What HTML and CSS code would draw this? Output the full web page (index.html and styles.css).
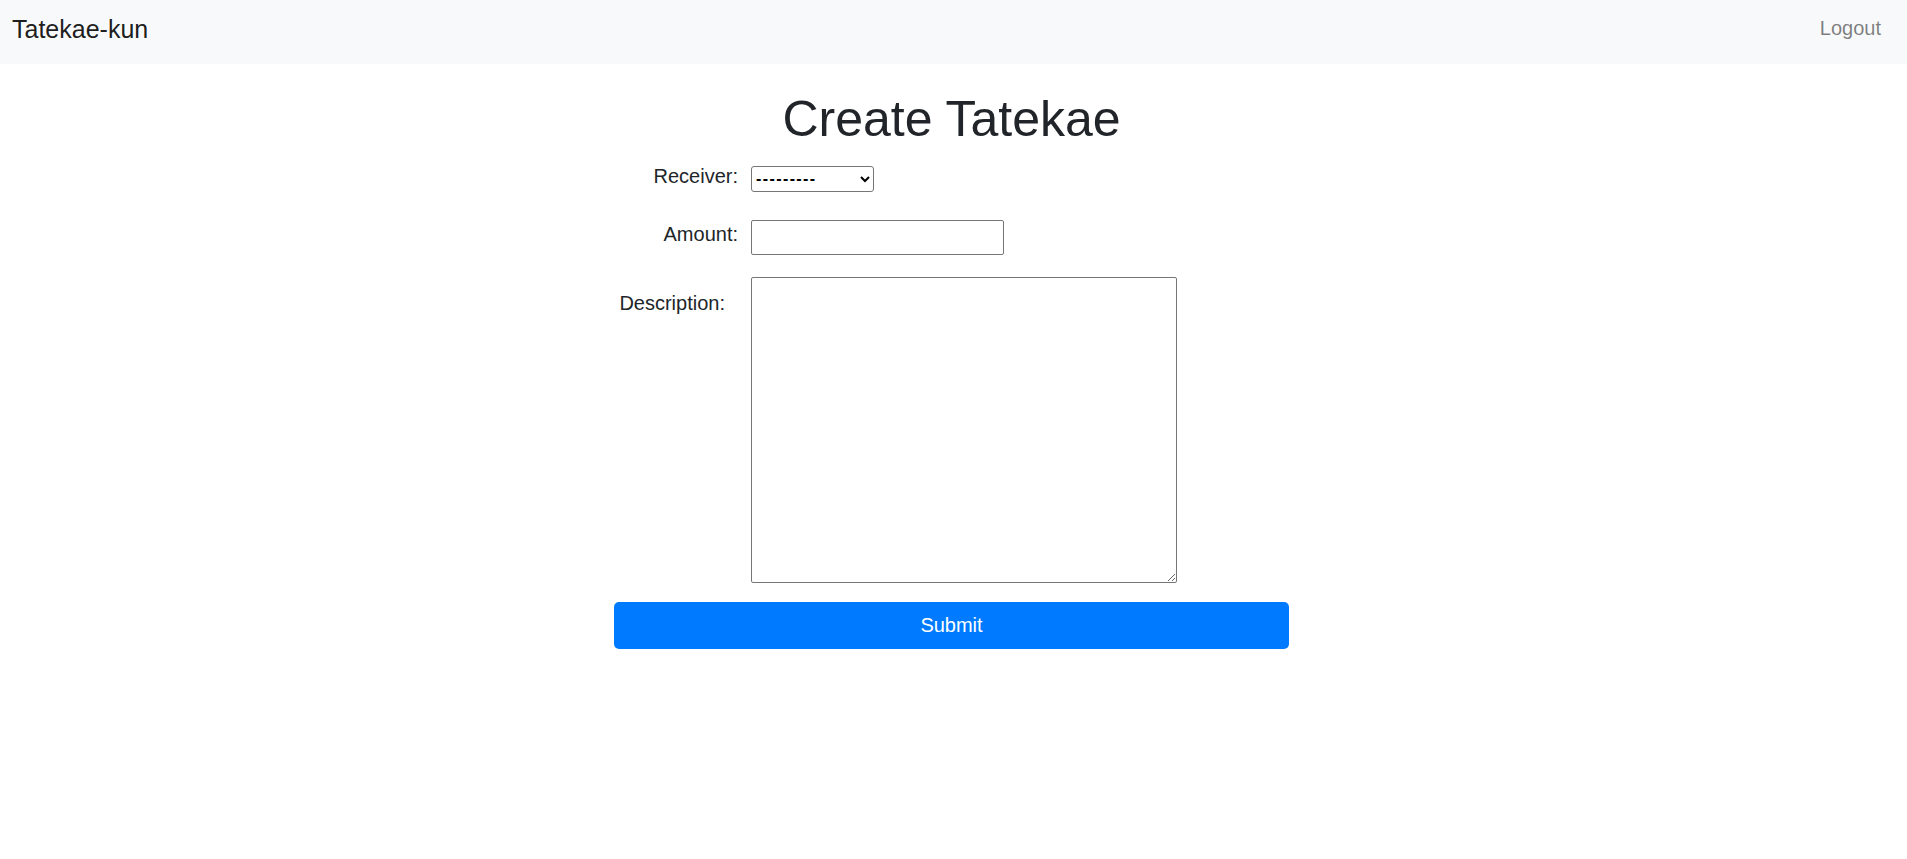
FILE: index.html
```html
<!DOCTYPE html>
<html lang="en">
<head>
<meta charset="utf-8">
<title>Create Tatekae</title>
<link rel="stylesheet" href="styles.css">
</head>
<body>
<nav class="navbar">
  <a class="brand" href="#">Tatekae-kun</a>
  <a class="nav-link" href="#">Logout</a>
</nav>
<main class="main">
  <h1 class="title">Create Tatekae</h1>
  <form class="form">
    <div class="row row-receiver">
      <label class="label" for="receiver">Receiver:</label>
      <select id="receiver" class="select"><option>---------</option></select>
    </div>
    <div class="row row-amount">
      <label class="label" for="amount">Amount:</label>
      <input id="amount" class="input" type="text">
    </div>
    <div class="row row-desc">
      <label class="label label-desc" for="desc">Description:</label>
      <textarea id="desc" class="textarea"></textarea>
    </div>
    <button class="btn" type="button">Submit</button>
  </form>
</main>
</body>
</html>
```

FILE: styles.css
```css
* { box-sizing: border-box; }
html, body { margin: 0; padding: 0; }
body {
  font-family: "Liberation Sans", Arial, sans-serif;
  font-size: 20px;
  line-height: 1.5;
  color: #212529;
  background: #fff;
}
.navbar {
  height: 64px;
  background: #f8f9fa;
  display: flex;
  justify-content: space-between;
  align-items: flex-start;
  padding: 0 26px 0 12px;
}
.brand {
  font-size: 25px;
  line-height: 36px;
  padding-top: 11px;
  color: rgba(0,0,0,.9);
  text-decoration: none;
}
.nav-link {
  font-size: 20px;
  line-height: 29px;
  padding-top: 14px;
  color: rgba(0,0,0,.5);
  text-decoration: none;
}
.main {
  padding-right: 4px;
}
.title {
  margin: 27px 0 0;
  font-size: 50px;
  font-weight: 500;
  line-height: 57.6px;
  text-align: center;
  color: #212529;
}
.form {
  width: 675px;
  margin: 0 auto;
  display: flex;
  flex-direction: column;
}
.row {
  display: flex;
  align-items: flex-start;
}
.row-receiver { margin-top: 13px; }
.row-amount { margin-top: 28px; }
.row-desc { margin-top: 22px; }
.label {
  width: 124px;
  margin-right: 13px;
  text-align: right;
  line-height: 28.8px;
  color: #212529;
  white-space: nowrap;
}
.row-desc .label { margin-top: 12px; }
.label-desc { padding-right: 13px; }
.select {
  margin-top: 4px;
  width: 123px;
  height: 26px;
  font-family: "Liberation Sans", Arial, sans-serif;
  font-size: 16px;
  font-weight: 700;
  letter-spacing: 1.4px;
  border: 1px solid #767676;
  border-radius: 3px;
  background: #fff;
  color: #000;
}
.input {
  width: 253px;
  height: 35px;
  border: 1px solid #767676;
  border-radius: 2px;
  font-size: 16px;
}
.textarea {
  width: 426px;
  height: 306px;
  border: 1px solid #767676;
  border-radius: 2px;
  font-size: 16px;
  margin: 0;
}
.btn {
  margin-top: 19px;
  width: 675px;
  height: 47px;
  border: none;
  border-radius: 5px;
  background: #007bff;
  color: #fff;
  font-family: "Liberation Sans", Arial, sans-serif;
  font-size: 20px;
  line-height: 28.8px;
  padding: 0;
}
```
